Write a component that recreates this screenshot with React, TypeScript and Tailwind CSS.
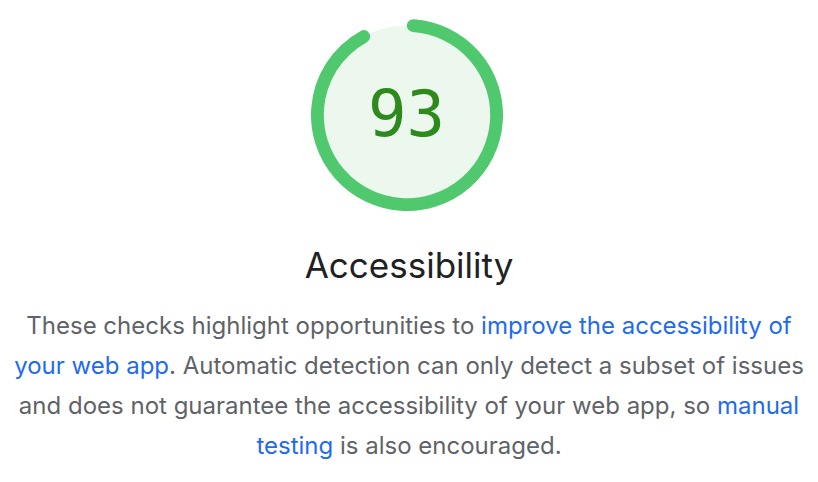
import React from 'react';

const RADIUS = 56;
const CIRCUMFERENCE = 2 * Math.PI * RADIUS;

function ScoreGauge({ score }: { score: number }) {
  // leave room for the round caps so the arc starts just right of the top
  const arc = (score / 100) * CIRCUMFERENCE - 8;
  return (
    <div className="relative mr-[5px] h-[192px] w-[192px]">
      <svg viewBox="0 0 120 120" className="h-full w-full">
        <circle cx="60" cy="60" r={RADIUS} fill="#ecf7ee" />
        <circle
          cx="60"
          cy="60"
          r={RADIUS}
          fill="none"
          stroke="#50c96e"
          strokeWidth="8"
          strokeLinecap="round"
          strokeDasharray={`${arc} ${CIRCUMFERENCE}`}
          transform="rotate(-86 60 60)"
        />
      </svg>
      <div className="absolute inset-0 flex items-center justify-center pb-[2px] font-['DejaVu_Sans_Mono',monospace] text-[64px] leading-none text-[#2e8a1c]">
        {score}
      </div>
    </div>
  );
}

export default function App() {
  return (
    <div className="flex min-h-[482px] w-[818px] flex-col items-center bg-white pt-[19px] font-['Inter',sans-serif]">
      <ScoreGauge score={93} />
      <h2 className="mt-[34px] text-[35px] leading-[40px] font-normal text-[#202124]">Accessibility</h2>
      <p className="mt-[21px] w-[806px] text-center text-[24px] leading-[40px] text-[#5f6368]">
        These checks highlight opportunities to{' '}
        <a href="#" className="text-[#1f6bf0]">improve the accessibility of your web app</a>. Automatic
        detection can only detect a subset of issues and does not guarantee the accessibility of your web
        app, so{' '}
        <a href="#" className="text-[#1f6bf0]">manual testing</a> is also encouraged.
      </p>
    </div>
  );
}
